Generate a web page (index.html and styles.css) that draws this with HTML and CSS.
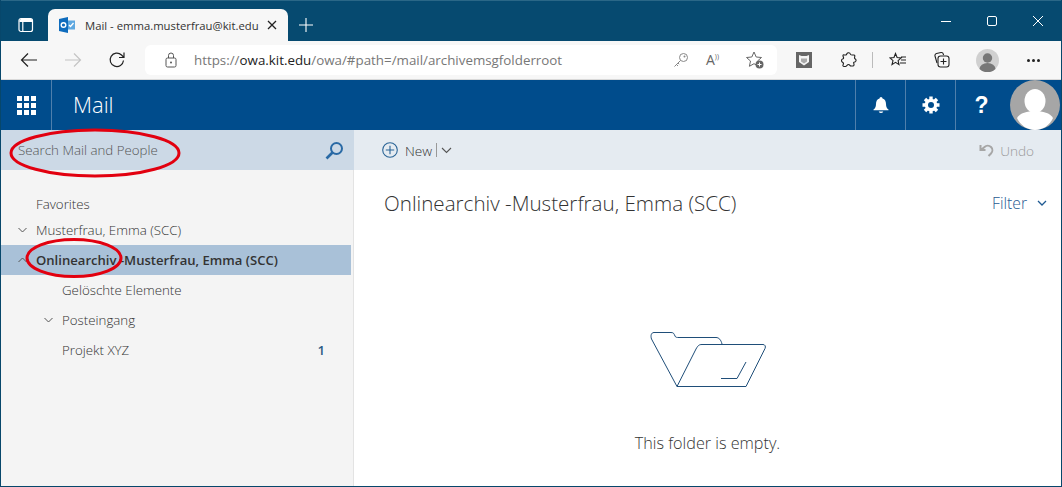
FILE: index.html
```html
<!DOCTYPE html>
<html lang="en">
<head>
<meta charset="utf-8">
<title>Mail</title>
<link rel="stylesheet" href="styles.css">
</head>
<body>
<div class="window">
  <div class="titlebar">
    <svg class="tabs-icon" width="16" height="16" viewBox="0 0 16 16"><rect x="1" y="1.500" width="13.500" height="13" rx="2" fill="none" stroke="#fff" stroke-width="1.200"/><path d="M1.500 3.500a1.500 1.500 0 0 1 1.500-1.500h10.500a.8.8 0 0 1 .5 1v2H1.500z" fill="#fff"/><path d="M4.800 5v9" stroke="#fff" stroke-width="1.200"/></svg>
    <div class="tab">
      <svg class="tab-logo" width="16" height="16" viewBox="0 0 16 16"><rect x="7" y="3.500" width="9" height="9" fill="#5ea8e0"/><path d="M10 8l1.500 1.500L14.500 6" fill="none" stroke="#fff" stroke-width="1.300"/><path d="M0 2l9-2v16l-9-2z" fill="#0f6cbd"/><circle cx="4.500" cy="8" r="2.300" fill="none" stroke="#fff" stroke-width="1.400"/></svg>
      <span class="tab-title">Mail - emma.musterfrau@kit.edu</span>
      <svg class="tab-close" width="10" height="10" viewBox="0 0 10 10"><path d="M1 1l8 8M9 1l-8 8" stroke="#222" stroke-width="1.300"/></svg>
    </div>
    <svg class="new-tab" width="16" height="16" viewBox="0 0 16 16"><path d="M8 1v14M1 8h14" stroke="#fff" stroke-width="1.100"/></svg>
    <div class="win-controls">
      <svg width="10" height="10" viewBox="0 0 10 10"><path d="M0 5.500h10" stroke="#fff" stroke-width="1"/></svg>
      <svg width="10" height="10" viewBox="0 0 10 10"><rect x=".5" y=".5" width="9" height="9" rx="1.500" fill="none" stroke="#fff"/></svg>
      <svg width="10" height="10" viewBox="0 0 10 10"><path d="M0 0l10 10M10 0L0 10" stroke="#fff" stroke-width="1"/></svg>
    </div>
  </div>

  <div class="toolbar">
    <div class="nav-buttons">
      <svg width="18" height="16" viewBox="0 0 18 16"><path d="M17 8H1.500M8 1.500L1.500 8 8 14.500" fill="none" stroke="#222" stroke-width="1.200"/></svg>
      <svg width="18" height="16" viewBox="0 0 18 16"><path d="M1 8h15.500M10 1.500L16.500 8 10 14.500" fill="none" stroke="#c4c4c4" stroke-width="1.200"/></svg>
      <svg width="18" height="18" viewBox="0 0 18 18"><path d="M15.500 9.500A6.700 6.700 0 1 1 13.500 4l2 2M16 1.500V6.500h-5" fill="none" stroke="#222" stroke-width="1.200"/></svg>
    </div>
    <div class="address">
      <svg class="lock" width="14" height="16" viewBox="0 0 14 16"><rect x="2" y="6" width="10" height="9" rx="1.500" fill="none" stroke="#555" stroke-width="1"/><path d="M4.500 6V3.500a2.500 2.500 0 0 1 5 0V6" fill="none" stroke="#555"/><circle cx="7" cy="10.500" r="1" fill="#555"/></svg>
      <span class="url"><span class="url-dim">https://</span>owa.kit.edu<span class="url-dim">/owa/#path=/mail/archivemsgfolderroot</span></span>
      <div class="addr-icons">
        <svg width="16" height="16" viewBox="0 0 16 16"><circle cx="10.500" cy="5.500" r="4" fill="none" stroke="#888"/><circle cx="11.500" cy="4.500" r="1" fill="#888"/><path d="M7.500 8.500L1.500 14.500M3.500 12.500l1.500 1.500M5 11l1.200 1.200" fill="none" stroke="#888"/></svg>
        <span class="read-aloud">A<sup>))</sup></span>
        <svg width="20" height="20" viewBox="0 0 20 20"><path d="M9 2l2.200 5 5.300.5-4 3.500 1.100 5.300L9 13.700l-4.600 2.600L5.500 11l-4-3.500 5.300-.5z" fill="none" stroke="#666"/><circle cx="14.500" cy="14.500" r="4" fill="#666"/><path d="M14.500 12.500v4M12.500 14.500h4" stroke="#fff"/></svg>
      </div>
    </div>
    <div class="ext-icons">
      <svg width="16" height="16" viewBox="0 0 16 16"><rect width="16" height="16" fill="#666"/><path d="M3 3l2.500 1h5L13 3v7l-5 3.500L3 10z" fill="#f4f4f4"/><path d="M5 6.500h6v3l-3 2-3-2z" fill="#aaa"/></svg>
      <svg width="16" height="16" viewBox="0 0 16 16"><path d="M6 1.500c.5-1 3-1 3.300.5.100.7.700 1 1.700 1h2a1 1 0 0 1 .8 1.200l-.3 1.800c0 .8 1 1 1.300 1.500.6 1 0 2.500-1.300 2.500-.6 0-1 .5-.8 1l.3 1.500c.2 1-.6 1.500-1.500 1.500h-1.500c-1.200 0-1-1.500-2.500-1.500S5.700 14.500 4.500 14.500H3c-.8 0-1.300-.7-1-1.500l.5-1.500c.1-.6-.5-1-1-1.300C.2 9.500.2 7.500 1.500 7c.7-.2 1.300-.5 1-1.500l-.5-1.500C1.800 3.200 2.500 2.500 3.200 3h1.500C5.500 3 5.800 2.200 6 1.500z" fill="none" stroke="#222" stroke-width="1.100"/></svg>
      <span class="divider"></span>
      <svg width="18" height="16" viewBox="0 0 18 16"><path d="M6.500 1.500l1.600 4 4 .4-3 2.700.9 4-3.500-2.200L3 12.600l1-4-3-2.700 4-.4zM12 5h5M12 8h5M11 11h6" fill="none" stroke="#222" stroke-width="1.100"/></svg>
      <svg width="18" height="18" viewBox="0 0 18 18"><path d="M4 12L2 5a2 2 0 0 1 1.500-2.500L8 1.500A2 2 0 0 1 10.300 3l.3 1" fill="none" stroke="#222" stroke-width="1.100"/><rect x="5" y="5" width="11" height="11" rx="2.500" fill="none" stroke="#222" stroke-width="1.100"/><path d="M10.500 7.500v6M7.500 10.500h6" stroke="#222" stroke-width="1.100"/></svg>
      <svg class="profile" width="23" height="23" viewBox="0 0 23 23"><circle cx="11.500" cy="11.500" r="11.500" fill="#d0d0d0"/><circle cx="11.500" cy="9" r="4.700" fill="#777"/><path d="M3.500 20a8 6 0 0 1 16 0 11.500 11.500 0 0 1-16 0z" fill="#777"/></svg>
      <span class="dots"><i></i><i></i><i></i></span>
    </div>
  </div>

  <header class="owa-header">
    <div class="waffle"><span class="waffle-grid"><i></i><i></i><i></i><i></i><i></i><i></i><i></i><i></i><i></i></span></div>
    <div class="app-name">Mail</div>
    <div class="header-btn"><svg width="16" height="18" viewBox="0 0 16 18"><path d="M8 1a1.500 1.500 0 0 1 1.500 1.500C12 3.300 13 5.500 13 8c0 3 1 4.500 2.500 5.500v.7H.5v-.7C2 12.500 3 11 3 8c0-2.500 1-4.700 3.500-5.500A1.500 1.500 0 0 1 8 1z" fill="#fff"/><path d="M5.700 15.500h4.600A2.500 2.500 0 0 1 8 17a2.500 2.500 0 0 1-2.300-1.500z" fill="#fff"/></svg></div>
    <div class="header-btn"><svg width="18" height="18" viewBox="0 0 18 18"><path d="M9 .5v17M.5 9h17M3 3l12 12M15 3L3 15" stroke="#fff" stroke-width="3.400"/><circle cx="9" cy="9" r="6.300" fill="#fff"/><circle cx="9" cy="9" r="3" fill="#004c8c"/></svg></div>
    <div class="header-btn help">?</div>
    <div class="avatar"><svg width="50" height="50" viewBox="0 0 50 50"><circle cx="25" cy="25" r="25" fill="#a6a6a6"/><ellipse cx="25" cy="21" rx="10.500" ry="12" fill="#fff"/><path d="M7 38c3-5 10-7 18-7s15 2 18 7c-3 7-10 12-18 12S10 45 7 38z" fill="#fff"/></svg></div>
  </header>

  <div class="owa-body">
    <aside class="sidebar">
      <div class="search">
        <span class="search-text">Search Mail and People</span>
        <svg width="19" height="19" viewBox="0 0 19 19"><circle cx="11.500" cy="7.500" r="5.500" fill="none" stroke="#2a6aa5" stroke-width="2"/><path d="M7.500 11.500L1.500 17.500" stroke="#2a6aa5" stroke-width="2.600"/></svg>
      </div>
      <nav class="folders">
        <div class="folder lvl1 favorites">Favorites</div>
        <div class="folder lvl1 account"><svg class="chev" width="9" height="6" viewBox="0 0 9 6"><path d="M.5 1l4 4 4-4" fill="none" stroke="#555"/></svg>Musterfrau, Emma (SCC)</div>
        <div class="folder lvl1 selected"><svg class="chev" width="9" height="6" viewBox="0 0 9 6"><path d="M.5 5l4-4 4 4" fill="none" stroke="#555"/></svg>Onlinearchiv -Musterfrau, Emma (SCC)</div>
        <div class="folder lvl2">Gelöschte Elemente</div>
        <div class="folder lvl2"><svg class="chev" width="9" height="6" viewBox="0 0 9 6"><path d="M.5 1l4 4 4-4" fill="none" stroke="#555"/></svg>Posteingang</div>
        <div class="folder lvl2">Projekt XYZ<span class="count">1</span></div>
      </nav>
    </aside>
    <main class="content">
      <div class="commands">
        <svg class="new-icon" width="16" height="16" viewBox="0 0 16 16"><circle cx="8" cy="8" r="7.300" fill="none" stroke="#2a6496" stroke-width="1.100"/><path d="M8 3.800v8.400M3.800 8h8.400" stroke="#2a6496" stroke-width="1.100"/></svg>
        <span class="new-label">New</span>
        <span class="cmd-sep"></span>
        <svg width="11" height="7" viewBox="0 0 11 7"><path d="M1 1l4.500 4.500L10 1" fill="none" stroke="#555" stroke-width="1.100"/></svg>
        <span class="undo"><svg width="15" height="13" viewBox="0 0 15 13"><path d="M1.500 1v5h5M2 6l3.500-3A4.500 4.500 0 0 1 12 9.500L9.500 12" fill="none" stroke="#a6a6a6" stroke-width="2"/></svg>Undo</span>
      </div>
      <div class="list-head">
        <h1 class="folder-title">Onlinearchiv -Musterfrau, Emma (SCC)</h1>
        <span class="filter">Filter<svg width="10" height="6" viewBox="0 0 10 6"><path d="M1 1l4 4 4-4" fill="none" stroke="#1f5a92" stroke-width="1.300"/></svg></span>
      </div>
      <div class="empty">
        <svg class="empty-icon" width="116" height="58" viewBox="0 0 116 58"><g fill="none" stroke="#1f4e79" stroke-width="1"><path d="M27 55.500L1.500 8C.5 5 1 1.500 4 1.500H21C24 1.500 24 3 25 5 25.500 6.500 27 6.500 29 6.500H66C69 6.500 71 9 72 13"/><path d="M27 55.500L46 18C48 14.500 49 13.500 52 13.500H113C115 13.500 116 15.500 115 17.500L96 55.500z"/><path d="M96 31L87 47.500H71"/></g></svg>
        <p class="empty-text">This folder is empty.</p>
      </div>
    </main>
  </div>

  <svg class="annot annot-search" width="172" height="52" viewBox="0 0 172 52"><ellipse cx="86" cy="26" rx="84" ry="23" fill="none" stroke="#e2000f" stroke-width="3"/></svg>
  <svg class="annot annot-archive" width="98" height="48" viewBox="0 0 98 48"><ellipse cx="49" cy="24" rx="47" ry="18.500" fill="none" stroke="#e2000f" stroke-width="3"/></svg>
</div>
</body>
</html>
```

FILE: styles.css
```css
* { box-sizing: border-box; }
html, body { margin: 0; padding: 0; }
body { font-family: "Open Sans", "Noto Sans", sans-serif; background: #fff; overflow: hidden; }
.window {
  position: relative;
  width: 1062px;
  height: 487px;
  border: 1px solid #07476b;
  border-top: 0;
  display: flex;
  flex-direction: column;
  overflow: hidden;
}

/* browser chrome */
.titlebar {
  height: 41px;
  flex: none;
  background: #064a70;
  border-top: 1px solid #2a6787;
  display: flex;
  align-items: flex-end;
  padding-left: 17px;
}
.tabs-icon { margin-bottom: 8px; }
.tab {
  width: 240px;
  height: 32px;
  margin-left: 14px;
  background: #f7f7f7;
  border-radius: 7px 7px 0 0;
  display: flex;
  align-items: center;
  padding-left: 11px;
}
.tab-logo { flex: none; margin-right: 10px; }
.tab-title {
  width: 176px;
  flex: none;
  white-space: nowrap;
  font-size: 11.300px;
  color: #333;
}
.tab-close { margin-left: 6px; }
.new-tab { margin: 0 0 8px 10px; }
.win-controls {
  margin-left: auto;
  display: flex;
  gap: 36px;
  margin-bottom: 15px;
  padding-right: 18px;
}

.toolbar {
  height: 39px;
  flex: none;
  background: #f7f7f7;
  border-bottom: 1px solid #d9d9d9;
  display: flex;
  align-items: center;
}
.nav-buttons {
  display: flex;
  align-items: center;
  gap: 26px;
  padding-left: 19px;
  width: 144px;
  flex: none;
}
.address {
  width: 632px;
  height: 30px;
  flex: none;
  background: #fff;
  border-radius: 6px;
  display: flex;
  align-items: center;
  padding-left: 19px;
}
.lock { margin-right: 16px; flex: none; }
.url { font-size: 13.350px; color: #222; white-space: nowrap; }
.url-dim { color: #777; }
.addr-icons {
  margin-left: auto;
  display: flex;
  align-items: center;
  gap: 17px;
  padding-right: 12px;
}
.read-aloud { font-size: 14px; color: #666; width: 22px; line-height: 16px; white-space: nowrap; }
.read-aloud sup { font-size: 7px; vertical-align: 6px; line-height: 0; }
.ext-icons {
  display: flex;
  align-items: center;
  padding-left: 19px;
}
.ext-icons > svg:nth-child(2) { margin-left: 29px; }
.divider { width: 1px; height: 16px; background: #bbb; margin: 0 16px 0 15px; }
.ext-icons > svg:nth-child(5) { margin-left: 26px; }
.profile { margin-left: 25px; }
.dots { display: flex; gap: 2px; margin-left: 28px; }
.dots i { width: 3px; height: 3px; border-radius: 50%; background: #222; }

/* OWA header */
.owa-header {
  height: 50px;
  flex: none;
  background: #004c8c;
  display: flex;
  align-items: stretch;
  color: #fff;
}
.waffle {
  width: 51px;
  flex: none;
  border-right: 1px solid #4f7fac;
  display: flex;
  align-items: center;
  justify-content: center;
  padding-left: 1px;
}
.waffle-grid {
  display: grid;
  grid-template-columns: repeat(3, 5px);
  grid-auto-rows: 5px;
  gap: 2px;
}
.waffle-grid i { background: #fff; }
.app-name {
  flex: 1;
  font-size: 22px;
  font-weight: 300;
  line-height: 48px;
  padding-left: 21px;
}
.header-btn {
  width: 50px;
  flex: none;
  border-left: 1px solid #4f7fac;
  display: flex;
  align-items: center;
  justify-content: center;
}
.help { width: 55px; padding-right: 3px; font: bold 23px "Liberation Sans", sans-serif; }
.avatar { width: 50px; flex: none; margin-right: 1px; }
.avatar svg { display: block; }

.owa-body { flex: 1; display: flex; min-height: 0; }
.sidebar {
  width: 353px;
  flex: none;
  background: #f4f4f4;
  border-right: 1px solid #e3e3e3;
  display: flex;
  flex-direction: column;
}
.search {
  height: 40px;
  flex: none;
  background: #ccd9e6;
  display: flex;
  align-items: center;
  justify-content: space-between;
  padding: 0 10px 0 17px;
  margin-right: -1px;
}
.search-text { font-size: 13.300px; font-weight: 300; color: #555; }
.folders { padding-top: 20px; color: #333; }
.folder {
  position: relative;
  height: 30px;
  display: flex;
  align-items: center;
  white-space: nowrap;
  font-size: 13.300px;
  font-weight: 300;
}
.favorites { height: 28px; }
.account { height: 27px; padding-bottom: 4px; }
.lvl1 { padding-left: 35px; }
.lvl2 { padding-left: 61px; }
.chev { position: absolute; margin-left: -18px; }
.folder.selected {
  background: #a9c1d8;
  font-weight: 600;
  font-size: 13.100px;
  margin-right: 2px;
  color: #333;
}
.count { position: absolute; right: 28px; font-weight: 600; color: #2a5a85; }

.content { flex: 1; display: flex; flex-direction: column; min-width: 0; }
.commands {
  height: 40px;
  flex: none;
  background: #e5ebf1;
  display: flex;
  align-items: center;
  padding: 0 27px 0 28px;
  font-size: 13.600px;
  font-weight: 300;
}
.new-label { margin-left: 7px; color: #333; }
.cmd-sep { width: 1px; height: 14px; background: #999; margin: 0 4px 0 4px; }
.undo { margin-left: auto; display: flex; align-items: center; gap: 6px; color: #999; }
.list-head {
  display: flex;
  justify-content: space-between;
  align-items: center;
  height: 66px;
  flex: none;
  padding: 0 14px 0 30px;
}
.folder-title { font-weight: 300; font-size: 20.600px; color: #333; margin: 0; }
.filter { color: #1f5a92; font-size: 15.700px; font-weight: 300; display: flex; align-items: center; gap: 10px; }
.empty {
  flex: 1;
  display: flex;
  flex-direction: column;
  align-items: center;
  padding-top: 95px;
}
.empty-icon { flex: none; }
.empty-text { margin: 43px 0 0; font-size: 16.200px; font-weight: 300; color: #333; }

.annot { position: absolute; pointer-events: none; }
.annot-search { left: 8px; top: 127px; }
.annot-archive { left: 24px; top: 234px; }
```
